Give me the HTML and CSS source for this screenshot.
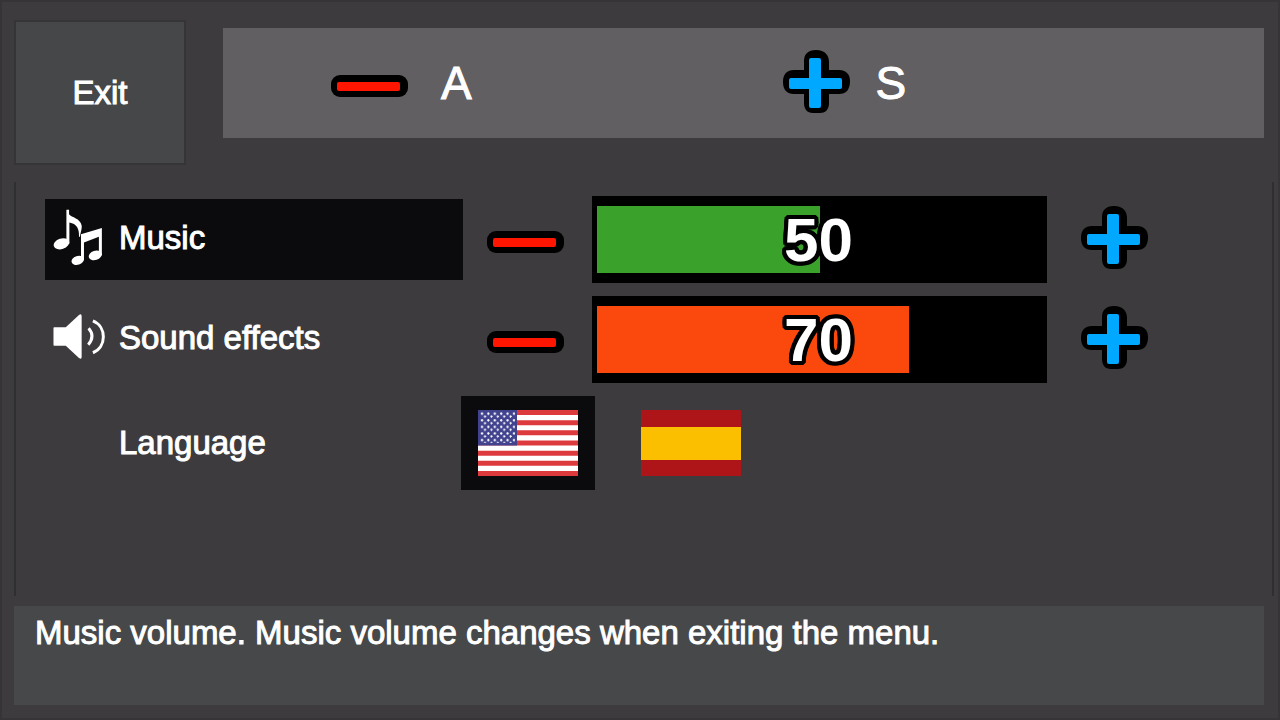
FILE: index.html
```
<!DOCTYPE html>
<html lang="en">
<head>
    <meta charset="UTF-8">
    <meta name="viewport" content="width=device-width, initial-scale=1.0">
    <title>Settings</title>
    <link rel="stylesheet" href="styles.css">
</head>
<body>
    <!-- Shared icons -->
    <svg class="sprite" aria-hidden="true">
        <symbol id="minus" viewBox="0 0 84 67">
            <rect x="0" y="25" width="77" height="22" rx="9" fill="#000"/>
            <rect x="6" y="32" width="63" height="9" rx="2" fill="#ff1500"/>
        </symbol>
        <symbol id="plus" viewBox="0 0 67 67">
            <path d="M33 0C42 0 46 5 46 12V20H56C63 20 67 24 67 31C67 40 63 44 56 44H46V53C46 60 42 63 37 63H30C24 63 21 59 21 53V44H11C4 44 0 40 0 32C0 24 4 20 11 20H21V11C21 4 25 0 33 0Z" fill="#000"/>
            <rect x="26" y="8" width="12" height="50" rx="2" fill="#00a8ff"/>
            <rect x="6" y="28" width="53" height="11" rx="2" fill="#00a8ff"/>
        </symbol>
    </svg>

    <div class="screen">
        <header class="top">
            <button class="exit" type="button">Exit</button>
            <div class="keys">
                <div class="key"><svg class="minus"><use href="#minus"/></svg><span>A</span></div>
                <div class="key"><svg class="plus"><use href="#plus"/></svg><span>S</span></div>
            </div>
        </header>

        <main class="panel">
            <div class="row">
                <label class="name selected" for="music">
                    <svg class="icon" viewBox="40 53 156 172" fill="#fff">
                        <ellipse cx="65" cy="158" rx="24" ry="16" transform="rotate(-18 65 158)"/>
                        <path d="M80 55h8v14C96 79 122 81 126 103C127 115 123 122 121 137h-3C119 112 111 98 89 94V158h-9z"/>
                        <ellipse cx="114" cy="208" rx="19" ry="13" transform="rotate(-18 114 208)"/>
                        <ellipse cx="167" cy="193" rx="20" ry="14" transform="rotate(-18 167 193)"/>
                        <path d="M124 129L187 110V193H178V137L133 154V208H124z"/>
                    </svg>
                    Music
                </label>
                <button class="step down" type="button" aria-label="Music down"><svg class="minus"><use href="#minus"/></svg></button>
                <div class="level">
                    <progress id="music" class="green" value="50" max="100"></progress>
                    <output for="music">50</output>
                </div>
                <button class="step up" type="button" aria-label="Music up"><svg class="plus"><use href="#plus"/></svg></button>
            </div>

            <div class="row">
                <label class="name" for="effects">
                    <svg class="icon" viewBox="40 356 156 172">
                        <path d="M43 411H78L118 374Q126 369 126 378V501Q126 510 118 504L78 467H43Q41 467 41 465V413Q41 411 43 411z" fill="#fff"/>
                        <path d="M147 414Q168 438 146 464M160 392C202 409 202 471 160 488" stroke="#fff" stroke-width="9" fill="none"/>
                    </svg>
                    Sound effects
                </label>
                <button class="step down" type="button" aria-label="Sound effects down"><svg class="minus"><use href="#minus"/></svg></button>
                <div class="level">
                    <progress id="effects" class="orange" value="70" max="100"></progress>
                    <output for="effects">70</output>
                </div>
                <button class="step up" type="button" aria-label="Sound effects up"><svg class="plus"><use href="#plus"/></svg></button>
            </div>

            <div class="row">
                <div class="name no-icon">Language</div>
                <button class="flag selected" type="button" aria-label="English">
                    <svg viewBox="0 0 100 66">
                        <defs>
                            <pattern id="stars" x="1" y="0.5" width="6.4" height="6.6" patternUnits="userSpaceOnUse">
                                <path d="M3 2v2.4M1.8 3.1h2.4M6 5v1.6M5 6h1.4M0 6h.8M6 0v.8" stroke="#fff" stroke-width="1.2"/>
                            </pattern>
                        </defs>
                        <rect width="100" height="66" fill="#fff"/>
                        <path d="M0 2.5H100M0 12.7H100M0 22.8H100M0 33H100M0 43.2H100M0 53.3H100M0 63.5H100" stroke="#dd3a3e" stroke-width="5.1"/>
                        <rect width="39" height="35.5" fill="#42438f"/>
                        <rect x="2" y="2" width="35" height="31" fill="url(#stars)"/>
                    </svg>
                </button>
                <button class="flag spain" type="button" aria-label="Spanish">
                    <svg viewBox="0 0 100 66">
                        <rect width="100" height="66" fill="#ae1519"/>
                        <rect y="17" width="100" height="33" fill="#fbbf00"/>
                    </svg>
                </button>
            </div>
        </main>

        <footer class="hint">Music volume. Music volume changes when exiting the menu.</footer>
    </div>
</body>
</html>
```
FILE: styles.css
```
* {
    box-sizing: border-box;
}

body {
    margin: 0;
    background: #3d3b3d;
    color: white;
    font-family: "Liberation Sans", Arial, sans-serif;
    font-size: 33px;
    line-height: 40px;
    -webkit-text-stroke: 1px white;
}

button {
    border: none;
    padding: 0;
    background: none;
    color: inherit;
    font: inherit;
    -webkit-text-stroke: inherit;
    cursor: pointer;
}

svg {
    display: block;
    flex: none;
}

.sprite {
    position: absolute;
    width: 0;
    height: 0;
}

.minus {
    width: 84px;
    height: 67px;
}

.plus {
    width: 67px;
    height: 67px;
}

.screen {
    min-height: 100vh;
    display: flex;
    flex-direction: column;
    padding: 18px 4px 13px 12px;
    border: 2px solid #363436;
}

/* Top bar */
.top {
    display: flex;
    align-items: flex-start;
    gap: 37px;
    padding-right: 10px;
}

.exit {
    width: 172px;
    height: 145px;
    background: #464748;
    border: 2px solid #353537;
}

.keys {
    flex: 1;
    display: grid;
    grid-template-columns: 1fr 1fr;
    margin-top: 8px;
    padding: 0 30px 0 108px;
    height: 110px;
    background: #615f61;
}

.key {
    display: flex;
    align-items: center;
    gap: 26px;
    font-size: 46px;
}

/* Settings list */
.panel {
    flex: 1;
    display: flex;
    flex-direction: column;
    gap: 13px;
    margin-top: 17px;
    padding: 14px 25px 0 29px;
    border: solid #2f2e30;
    border-width: 0 2px;
}

.row {
    display: grid;
    grid-template-columns: 418fr 129px 455fr 200px;
    align-items: center;
}

.name {
    display: flex;
    align-items: center;
    gap: 14px;
    height: 81px;
    padding: 0 8px 4px;
}

.no-icon {
    padding: 0 0 0 74px;
}

.icon {
    width: 52px;
    height: 57px;
}

.selected {
    background: #0b0a0c;
}

.down {
    padding-left: 24px;
}

.up {
    padding-left: 34px;
}

.level {
    position: relative;
    height: 87px;
    padding: 10px 5px;
    background: black;
}

progress {
    display: block;
    width: 100%;
    height: 100%;
    appearance: none;
    border: none;
}

progress::-webkit-progress-bar {
    background: black;
}

.green::-webkit-progress-value {
    background: #3aa12a;
}

.orange::-webkit-progress-value {
    background: #fb480c;
}

/* Number drawn over the bar */
.level output {
    position: absolute;
    inset: 0;
    display: flex;
    align-items: center;
    justify-content: center;
    padding-right: 2px;
    font-size: 62px;
    font-weight: bold;
    -webkit-text-stroke: 0;
    text-shadow: 4px 0 black, -4px 0 black, 0 4px black, 0 -4px black,
        3px 3px black, -3px 3px black, 3px -3px black, -3px -3px black,
        4px 2px black, -4px 2px black, 4px -2px black, -4px -2px black,
        2px 4px black, -2px 4px black, 2px -4px black, -2px -4px black;
}

.flag {
    justify-self: center;
    padding: 14px 17px;
}

.flag svg {
    width: 100px;
    height: 66px;
}

.spain {
    justify-self: start;
    margin-left: 32px;
}

/* Description */
.hint {
    min-height: 99px;
    margin: 10px 10px 0 0;
    padding: 7px 21px;
    background: #474849;
}
```
